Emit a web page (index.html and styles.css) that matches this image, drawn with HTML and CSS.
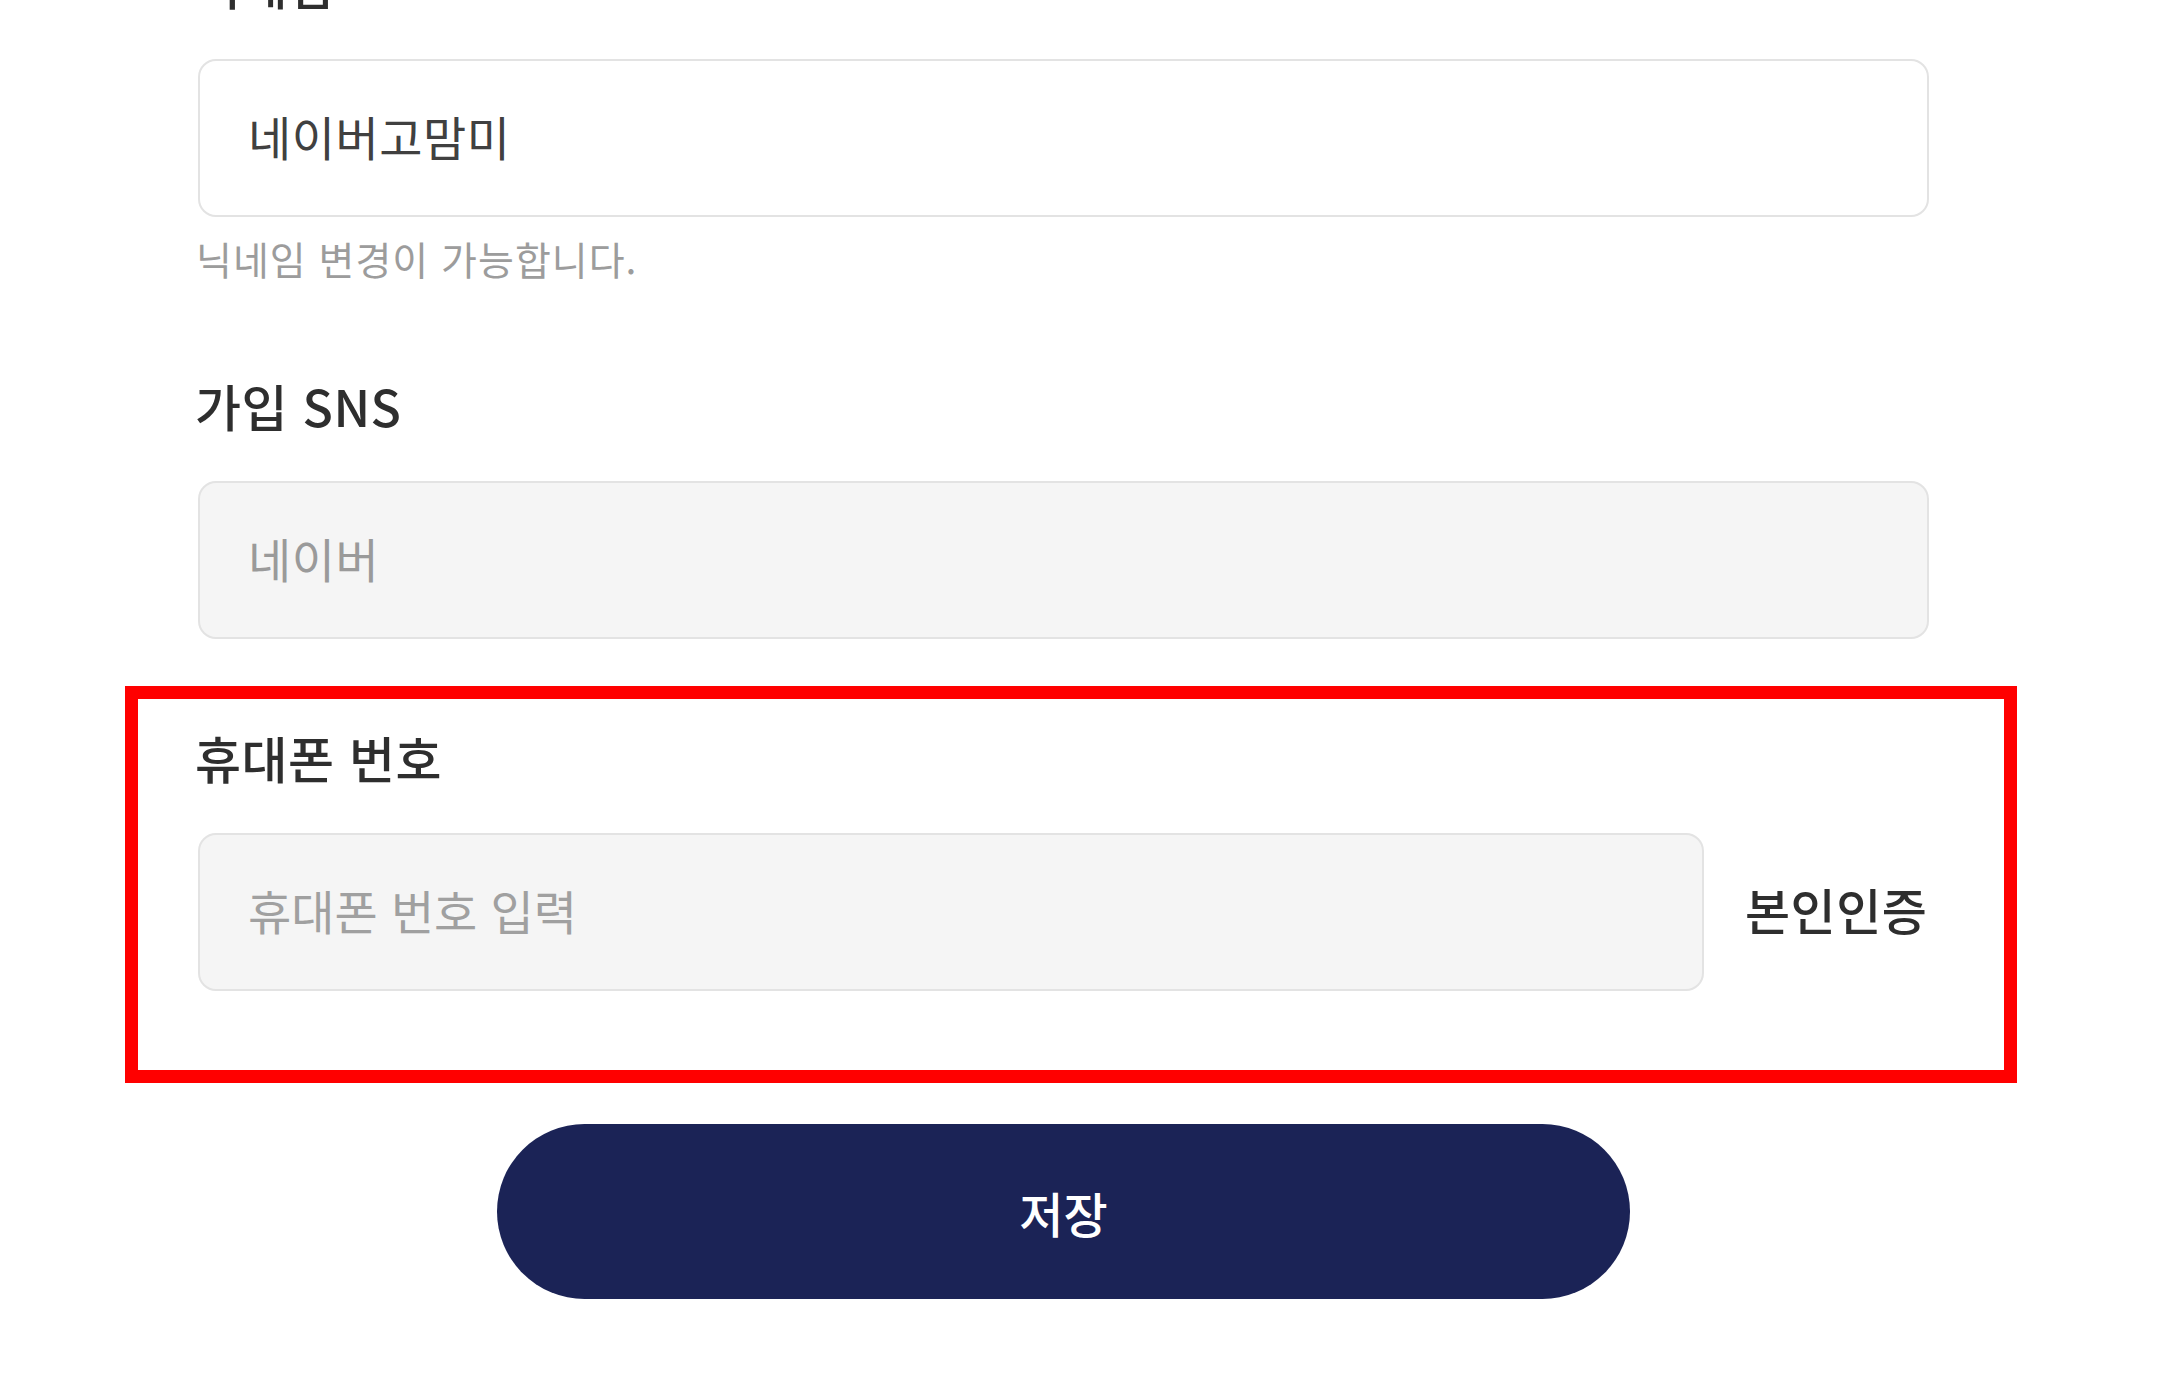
FILE: index.html
```html
<!DOCTYPE html>
<html lang="ko">
<head>
<meta charset="utf-8">
<title>회원정보 수정</title>
<link rel="stylesheet" href="styles.css">
</head>
<body>
<main class="page">
  <form class="form">
    <section class="field field-first">
      <label class="label" for="nick">닉네임</label>
      <input class="input" id="nick" type="text" value="네이버고맘미">
      <p class="help">닉네임 변경이 가능합니다.</p>
    </section>

    <section class="field field-sns">
      <label class="label" for="sns">가입 SNS</label>
      <input class="input input-disabled" id="sns" type="text" value="네이버" readonly>
    </section>

    <section class="field field-phone highlight">
      <label class="label" for="phone">휴대폰 번호</label>
      <div class="phone-row">
        <input class="input input-disabled input-phone" id="phone" type="tel" placeholder="휴대폰 번호 입력">
        <button class="verify" type="button">본인인증</button>
      </div>
    </section>

    <div class="actions">
      <button class="save" type="button">저장</button>
    </div>
  </form>
</main>
</body>
</html>
```

FILE: styles.css
```css
* {
  box-sizing: border-box;
}

html, body {
  margin: 0;
  padding: 0;
  background: #ffffff;
}

body {
  font-family: "Noto Sans CJK KR", "Noto Sans", sans-serif;
  color: #333333;
  overflow: hidden;
}

.page {
  width: 1731px;
  margin-left: 198px;
}

.form {
  display: flex;
  flex-direction: column;
}

.field {
  display: flex;
  flex-direction: column;
}

.field-first {
  margin-top: -41px;
}

.label {
  display: block;
  font-size: 50px;
  line-height: 48px;
  font-weight: 500;
  letter-spacing: 0.5px;
  color: #2e2e2e;
  margin: 0 0 52px -3px;
}

.field-phone .label {
  position: relative;
  top: -2px;
}

.input {
  display: block;
  width: 100%;
  height: 158px;
  padding: 0 0 6px 48px;
  border: 2px solid #e3e3e3;
  border-radius: 18px;
  background: #ffffff;
  font-family: "Noto Sans CJK KR", "Noto Sans", sans-serif;
  font-size: 47px;
  letter-spacing: 0.5px;
  color: #404040;
  outline: none;
}

.input-disabled {
  background: #f5f5f5;
  color: #9a9a9a;
}

.input::placeholder {
  color: #a0a0a0;
}

.input-phone {
  letter-spacing: 0;
}

.help {
  margin: 23px 0 0 -2px;
  font-size: 39px;
  line-height: 37px;
  letter-spacing: 1px;
  color: #9c9c9c;
}

.field-sns {
  margin-top: 104px;
}

.highlight {
  margin: 47px -88px 0 -73px;
  padding: 36px 75px 79px 60px;
  border: 13px solid #ff0000;
}

.highlight .label {
  margin-bottom: 50px;
}

.phone-row {
  display: flex;
  align-items: center;
  gap: 41px;
}

.input-phone {
  width: 1506px;
  flex: none;
}

.verify {
  flex: none;
  padding: 0 0 8px;
  border: none;
  background: none;
  font-family: "Noto Sans CJK KR", "Noto Sans", sans-serif;
  font-size: 49px;
  font-weight: 500;
  letter-spacing: 0.5px;
  color: #2e2e2e;
  cursor: pointer;
}

.actions {
  display: flex;
  justify-content: center;
  margin-top: 41px;
}

.save {
  width: 1133px;
  height: 175px;
  border: none;
  border-radius: 88px;
  background: #1b2356;
  color: #ffffff;
  font-family: "Noto Sans CJK KR", "Noto Sans", sans-serif;
  font-size: 48px;
  font-weight: 500;
  cursor: pointer;
}
```
